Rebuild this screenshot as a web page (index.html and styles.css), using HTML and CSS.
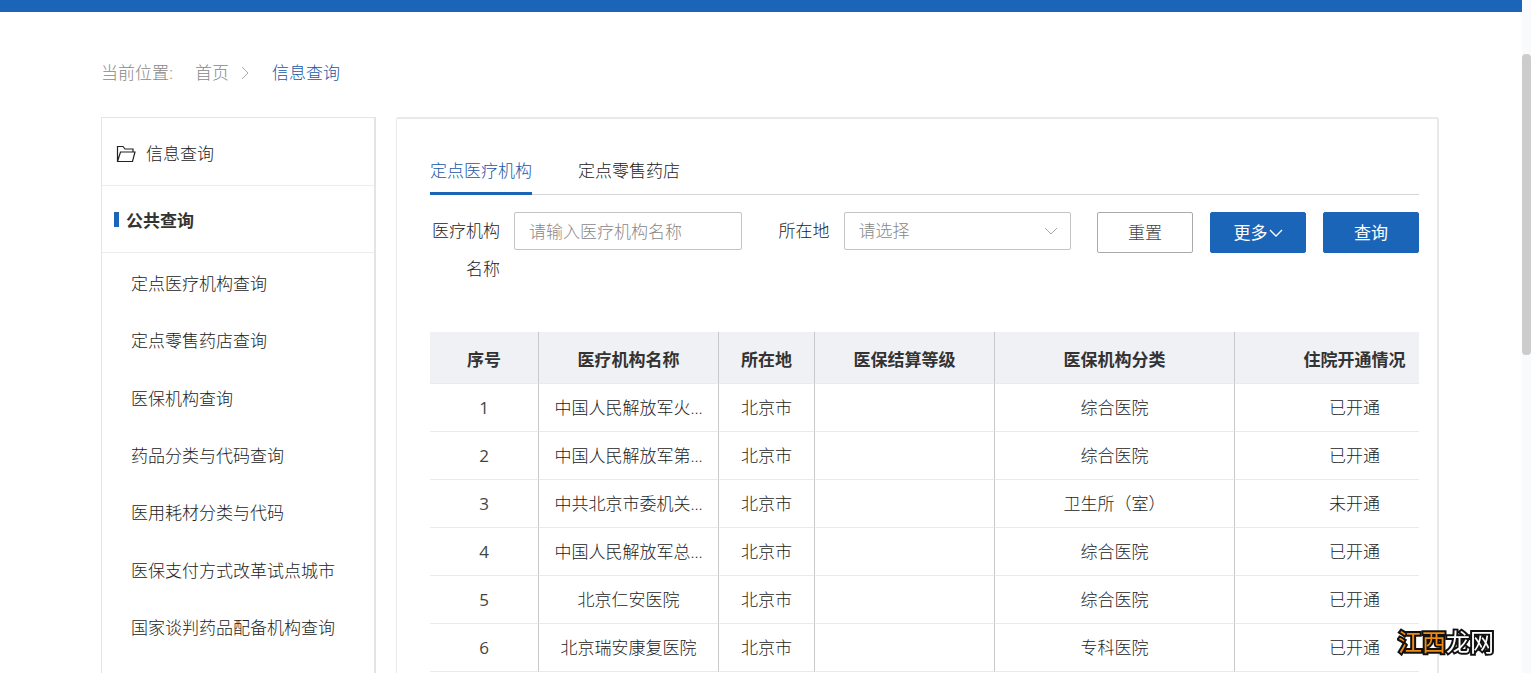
FILE: index.html
```html
<!DOCTYPE html>
<html lang="zh-CN">
<head>
<meta charset="utf-8">
<meta name="viewport" content="width=device-width, initial-scale=1">
<title>信息查询</title>
<link rel="stylesheet" href="styles.css">
</head>
<body>
<div class="page">
  <header class="topbar"></header>
  <div class="container">
    <nav class="breadcrumb" aria-label="当前位置">
      <span class="crumb-label">当前位置:</span>
      <a class="crumb" href="#">首页</a>
      <svg class="crumb-sep" viewBox="0 0 8 14" aria-hidden="true"><path d="M1 1l6 6-6 6"/></svg>
      <a class="crumb crumb-current" href="#">信息查询</a>
    </nav>
    <div class="columns">
      <aside class="sidebar">
        <div class="side-title">
          <svg class="folder" viewBox="0 0 20 18" aria-hidden="true"><path d="M1.5 16.5V1.5h5.5l2 2.5h8v3M1.5 16.5L4.5 7h14.5l-2.5 9.5z"/></svg>
          <span>信息查询</span>
        </div>
        <div class="side-group">公共查询</div>
        <nav class="side-menu">
          <a href="#">定点医疗机构查询</a>
          <a href="#">定点零售药店查询</a>
          <a href="#">医保机构查询</a>
          <a href="#">药品分类与代码查询</a>
          <a href="#">医用耗材分类与代码</a>
          <a href="#">医保支付方式改革试点城市</a>
          <a href="#">国家谈判药品配备机构查询</a>
        </nav>
      </aside>
      <main class="panel">
        <div class="tabs">
          <button class="tab tab-active" type="button">定点医疗机构</button>
          <button class="tab" type="button">定点零售药店</button>
        </div>
        <form class="filters">
          <div class="field">
            <label for="org-name">医疗机构名称</label>
            <input class="control" id="org-name" type="text" placeholder="请输入医疗机构名称">
          </div>
          <div class="field">
            <label for="region">所在地</label>
            <div class="select-wrap">
              <select class="control" id="region"><option>请选择</option></select>
              <svg class="select-arrow" viewBox="0 0 14 8" aria-hidden="true"><path d="M1 1l6 6 6-6"/></svg>
            </div>
          </div>
          <div class="actions">
            <button class="btn" type="reset">重置</button>
            <button class="btn btn-primary" type="button">更多<svg class="btn-arrow" viewBox="0 0 14 8" aria-hidden="true"><path d="M1 1l6 6 6-6"/></svg></button>
            <button class="btn btn-primary" type="button">查询</button>
          </div>
        </form>
        <div class="table-wrap">
          <table class="table">
            <colgroup><col class="c-no"><col class="c-name"><col class="c-area"><col class="c-level"><col class="c-type"><col class="c-open"></colgroup>
            <thead>
              <tr><th>序号</th><th>医疗机构名称</th><th>所在地</th><th>医保结算等级</th><th>医保机构分类</th><th>住院开通情况</th></tr>
            </thead>
            <tbody>
              <tr><td class="num">1</td><td>中国人民解放军火...</td><td>北京市</td><td></td><td>综合医院</td><td>已开通</td></tr>
              <tr><td class="num">2</td><td>中国人民解放军第...</td><td>北京市</td><td></td><td>综合医院</td><td>已开通</td></tr>
              <tr><td class="num">3</td><td>中共北京市委机关...</td><td>北京市</td><td></td><td>卫生所（室）</td><td>未开通</td></tr>
              <tr><td class="num">4</td><td>中国人民解放军总...</td><td>北京市</td><td></td><td>综合医院</td><td>已开通</td></tr>
              <tr><td class="num">5</td><td>北京仁安医院</td><td>北京市</td><td></td><td>综合医院</td><td>已开通</td></tr>
              <tr><td class="num">6</td><td>北京瑞安康复医院</td><td>北京市</td><td></td><td>专科医院</td><td>已开通</td></tr>
            </tbody>
          </table>
        </div>
      </main>
    </div>
  </div>
</div>
<div class="scrollbar" aria-hidden="true"><div class="thumb"></div></div>
<div class="watermark"><span class="watermark-accent">江西</span>龙网</div>
</body>
</html>
```
FILE: styles.css
```css
* { box-sizing: border-box; }

body {
  margin: 0;
  height: 100vh;
  overflow: hidden;
  display: flex;
  background: #fff;
  color: #222;
  font: 300 17px/24px "Open Sans", "Noto Sans CJK SC", sans-serif;
}

a { color: inherit; text-decoration: none; }
button, input, select { font: inherit; color: inherit; }
svg { fill: none; stroke: currentColor; flex: none; }

.page { flex: 1; min-width: 0; }
.topbar { height: 12px; background: #1b65b9; }
.container { padding: 49px 83px 0 101px; }

.breadcrumb { display: flex; align-items: center; color: #888; }
.crumb-label { margin-right: 22px; }
.crumb-sep { width: 8px; height: 14px; margin: 0 23px 0 12px; color: #aaa; }
.crumb-current { color: #1758a8; }

.columns { display: flex; gap: 20px; margin-top: 32px; }

.sidebar {
  flex: 0 0 275px;
  border: 1px solid #e4e4e4;
  border-right-width: 2px;
}
.side-title, .side-group {
  display: flex;
  align-items: center;
  height: 67px;
  border-bottom: 1px solid #ececec;
}
.side-title { height: 68px; padding: 5px 14px 0; gap: 10px; }
.folder { width: 20px; height: 18px; stroke-width: 1.2; }
.side-group { padding: 4px 12px 0; gap: 7px; color: #333; font-weight: 700; }
.side-group::before { content: ""; width: 5px; height: 15px; margin-bottom: 3px; background: #1b65b9; }
.side-menu { display: grid; grid-auto-rows: 1fr; align-items: center; height: 402px; margin-top: 2px; padding-left: 29px; }

.panel {
  flex: 1;
  min-width: 0;
  padding: 30px 18px 40px 33px;
  border: 2px solid #e9e9e9;
  border-left-width: 1px;
  border-radius: 2px;
}

.tabs { display: flex; gap: 46px; border-bottom: 1px solid #d4d4d4; }
.tab {
  height: 46px;
  margin-bottom: -1px;
  padding: 1px 0 0;
  border: 0;
  border-bottom: 3px solid transparent;
  background: none;
}
.tab-active { color: #1758a8; border-color: #1b65b9; }

.filters { display: flex; align-items: flex-start; margin-top: 17px; }
.field { display: flex; flex: 1; min-width: 0; gap: 14px; align-items: flex-start; }
.field + .field { margin-left: 18px; }
.field label { flex: 0 0 70px; line-height: 38px; text-align: right; }
.control {
  flex: 1;
  min-width: 0;
  width: 100%;
  height: 38px;
  padding: 0 14px;
  border: 1px solid #c4c4c4;
  border-radius: 2px;
  background: #fff;
  color: #888;
}
.control::placeholder { color: #888; opacity: 1; }
.select-wrap { display: grid; flex: 1; min-width: 0; align-items: center; }
.select-wrap > * { grid-area: 1 / 1; }
select.control { appearance: none; }
.select-arrow { justify-self: end; width: 14px; height: 8px; margin-right: 13px; color: #aaa; pointer-events: none; z-index: 1; }

.actions { display: flex; gap: 17px; margin-left: 26px; }
.btn {
  display: flex;
  align-items: center;
  justify-content: center;
  width: 96px;
  height: 41px;
  padding: 0;
  border: 1px solid #aaa;
  border-radius: 2px;
  background: #fff;
  color: #444;
}
.btn-primary { border-color: #1b65b9; background: #1b65b9; color: #fff; font-weight: 400; }
.btn-arrow { width: 14px; height: 8px; margin-left: 1px; stroke-width: 1.3; }

.table-wrap { margin-top: 44px; overflow: hidden; }
.table { width: 1045px; min-width: 100%; table-layout: fixed; border-collapse: separate; border-spacing: 0; text-align: center; }
.c-no { width: 109px; }
.c-name, .c-level { width: 180px; }
.c-area { width: 96px; }
.c-type, .c-open { width: 240px; }
.table th, .table td {
  height: 48px;
  padding: 0;
  border-right: 1px solid #c8c9cc;
  border-bottom: 1px solid #e8eaee;
  white-space: nowrap;
}
.table th { height: 52px; padding-top: 4px; background: #eff1f5; color: #333; font-weight: 700; }
.table .num { color: #444; font-weight: 400; }

.scrollbar { flex: 0 0 9px; padding-top: 54px; background: #f8fafc; }
.thumb { height: 301px; border-radius: 4px; background: #ccc; }

.watermark {
  position: fixed;
  right: 37px;
  bottom: 13px;
  color: #fff;
  font-size: 24px;
  line-height: 36px;
  font-weight: 400;
  -webkit-text-stroke: 4px #111;
  paint-order: stroke fill;
}
.watermark-accent { color: #f08a12; }
```
